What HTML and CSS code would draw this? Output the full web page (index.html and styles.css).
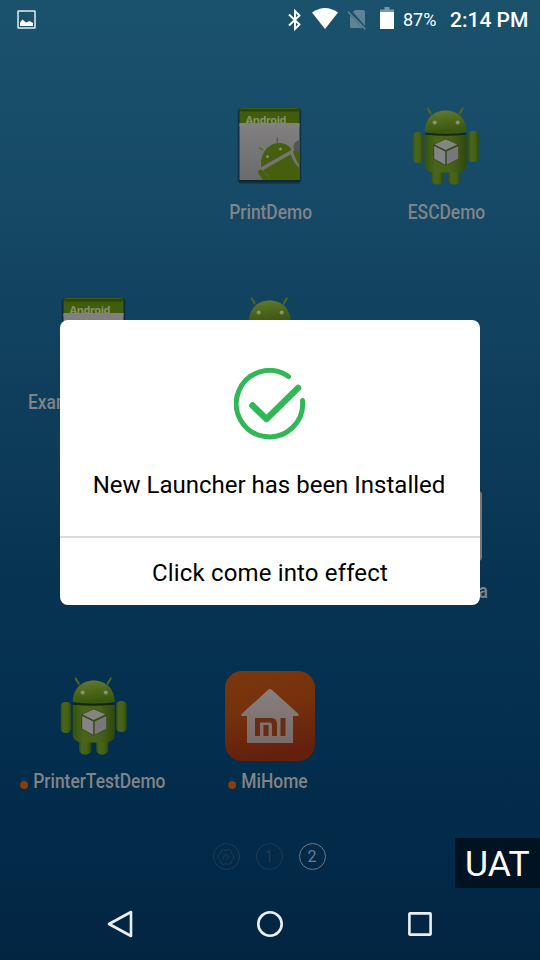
FILE: index.html
```html
<!DOCTYPE html>
<html lang="en">
<head>
<meta charset="utf-8">
<title>Launcher</title>
<link rel="stylesheet" href="styles.css">
</head>
<body>
<svg class="defs" aria-hidden="true">
  <defs>
    <linearGradient id="green" x1="0" x2="1"><stop offset="0" stop-color="#35510f"/><stop offset=".25" stop-color="#486519"/><stop offset=".65" stop-color="#46611a"/><stop offset="1" stop-color="#30480d"/></linearGradient>
    <linearGradient id="head" x1="0" y1="0" x2=".2" y2="1"><stop offset="0" stop-color="#667b35"/><stop offset=".5" stop-color="#4d681b"/><stop offset="1" stop-color="#3a560f"/></linearGradient>
    <linearGradient id="paper" x1="0" x2="0" y1="0" y2="1"><stop offset="0" stop-color="#828080"/><stop offset="1" stop-color="#6b6b6b"/></linearGradient>
    <linearGradient id="orange" x1="0" x2=".2" y1="0" y2="1"><stop offset="0" stop-color="#7b370d"/><stop offset=".5" stop-color="#75300e"/><stop offset="1" stop-color="#64200d"/></linearGradient>
    <linearGradient id="house" x1="0" x2="0" y1="0" y2="1"><stop offset="0" stop-color="#858080"/><stop offset="1" stop-color="#7c6b67"/></linearGradient>
    <symbol id="robot" viewBox="0.800 0 90 90">
      <path d="M30.500 12.500l-3-5M59.500 12.500l3-5" stroke="#4b671b" stroke-width="2.200" stroke-linecap="round"/>
      <rect x="31" y="62" width="12" height="21.500" rx="5" fill="url(#green)"/>
      <rect x="48" y="62" width="12" height="21.500" rx="5" fill="url(#green)"/>
      <rect x="12.500" y="31" width="10.500" height="31" rx="4.500" fill="url(#green)"/>
      <rect x="68" y="30" width="10.500" height="31" rx="4.500" fill="url(#green)"/>
      <path d="M24.500 34h42v29q0 8.500-10 8.500h-22q-10 0-10-8.500z" fill="url(#green)"/>
      <path d="M24.500 31c0-12 8-21.500 21-21.500s21 9.500 21 21.500q-21 3-42 0z" fill="url(#head)"/>
      <path d="M25 32.600q20.500 2.500 41 0" fill="none" stroke="#16270b" stroke-width="1.600"/>
      <circle cx="34.500" cy="21.500" r="2.100" fill="#899079"/><circle cx="57.500" cy="21.500" r="2.100" fill="#899079"/>
      <path d="M45.500 37.500l13 6.500V58l-13 7-12.500-7V44z" fill="#334b14"/>
      <path d="M45.500 38.200l11.500 5.200-11.500 5.600-11-5.600z" fill="#848484"/>
      <path d="M34 44.900l11 5.500v13.300l-11-6z" fill="#848484"/>
      <path d="M58 44.900l-11.500 5.500v13.300l11.500-6z" fill="#777"/>
    </symbol>
    <symbol id="sheet" viewBox="0 0 90 90">
      <rect x="12.500" y="7" width="64" height="76" rx="4" fill="#07131b" opacity=".25"/>
      <rect x="13.500" y="7.500" width="62" height="74" rx="3" fill="#07131b" opacity=".5"/>
      <path d="M14.500 22V10q0-3 3-3h54q3 0 3 3v12z" fill="#3f5d0c"/>
      <path d="M15.500 9.300h58" stroke="#2c430b" stroke-width="2.500"/>
      <path d="M14.500 22h60v57h-60z" fill="url(#paper)"/>
      <text x="20.500" y="22.500" class="sheet-text" textLength="41">Android</text>
      <path d="M14.500 22.500h60v3h-60z" fill="#828080"/>
      <path d="M74.500 39q-6 2-6 7t6 7z" fill="#555"/>
      <path d="M36.300 66c-2-13 7-24 17.500-24 5 0 11 2.500 12.700 7z" fill="#455f0c"/>
      <path d="M38.500 69L65.500 53.500q4 10 9 13.500V79H46z" fill="#455f0c"/>
      <path d="M68 50q3-2 6.500 2v12q-5-6-6.500-14z" fill="#455f0c"/>
      <path d="M32.500 71q2.500-5 7 0l6 8H38z" fill="#455f0c"/>
      <path d="M38 49l-4-2.500M52.300 42.500v-6" stroke="#4b6419" stroke-width="1.300"/>
      <path d="M37.500 67.500L66.500 50l5 12" fill="none" stroke="#777" stroke-width="1.500"/>
      <circle cx="42.500" cy="55.500" r="1.500" fill="#858585"/><circle cx="55.500" cy="48" r="1.500" fill="#858585"/>
    </symbol>
  </defs>
</svg>
<main class="screen">
  <header class="status">
    <svg class="shot" width="20" height="20" viewBox="0 0 20 20"><rect x="1" y="1" width="17" height="17" rx=".5" fill="none" stroke="#e5edf0" stroke-width="1.500"/><path d="M3 16v-3.500L5.500 9.500 9 12.500 12.500 11 16 13v3z" fill="#fff"/></svg>
    <svg class="bt" width="14" height="22" viewBox="0 0 14 22"><path d="M1 5.500l10.500 10L7 20V2l4.500 4.500L1 16.500" fill="none" stroke="#fff" stroke-width="1.900"/></svg>
    <svg class="wifi" width="26" height="21" viewBox="0 0 26 21"><path d="M0 4.500Q13-4.500 26 4.500L13 21z" fill="#fff"/></svg>
    <svg class="sim" width="20" height="21" viewBox="0 0 20 21"><path d="M6 3L8 1h8q2 0 2 2v14zM3 6l13 13H4.500q-1.500 0-1.500-1.500z" fill="#5e8395"/><path d="M.7 2.500l17.600 17.600" stroke="#5e8395" stroke-width="1.500"/></svg>
    <svg class="battery" width="14" height="22" viewBox="0 0 14 22"><path d="M0 5V2.500h4.500V0h5v2.500H14V5z" fill="#769aaa"/><path d="M0 5h14v17H0z" fill="#fff"/></svg>
    <span class="percent">87%</span>
    <span class="clock">2:14 PM</span>
  </header>

  <section class="apps">
    <div class="app"></div>
    <div class="app"><svg class="icon"><use href="#sheet"/></svg><span class="label">PrintDemo</span></div>
    <div class="app"><svg class="icon"><use href="#robot"/></svg><span class="label">ESCDemo</span></div>
    <div class="app"><svg class="icon"><use href="#sheet"/></svg><span class="label label-start">Exam</span></div>
    <div class="app"><svg class="icon"><use href="#robot"/></svg></div>
    <div class="app"></div>
    <div class="app"></div>
    <div class="app"></div>
    <div class="app"><svg class="icon" viewBox="0 0 90 90"><rect x="9" y="10" width="72" height="70" rx="4" fill="#777"/></svg><span class="label label-end">a</span></div>
    <div class="app"><svg class="icon"><use href="#robot"/></svg><span class="label label-new"><i class="dot"></i>PrinterTestDemo</span></div>
    <div class="app">
      <svg class="icon" viewBox="0 0 90 90"><rect width="90" height="90" rx="17" fill="url(#orange)"/><path d="M43.500 18.500q1.500-1.200 3 0L73.500 43q1 2-1 2H68v27H22V45h-4.500q-2 0-1-2z" fill="url(#house)"/><path d="M30 65V47h16q6 0 6 6v12h-5V54q0-2.500-2.500-2.500H35V65zM38.500 54h5v11h-5zM55.500 47h5v18h-5z" fill="#682b14"/></svg>
      <span class="label label-new"><i class="dot"></i>MiHome</span>
    </div>
    <div class="app"></div>
  </section>

  <div class="pager">
    <span class="page"><svg width="18" height="18" viewBox="0 0 18 18" fill="none" stroke="currentColor"><path d="M6.500 1.500q2.500 1.600 5 0l2.500 1.500q0 3 2.700 4.200v3.600Q14 12 14 15l-2.500 1.500q-2.500-1.600-5 0L4 15q0-3-2.700-4.200V7.200Q4 6 4 3z"/><path d="M9 9h-.5M6.700 11.500V9A2.400 2.400 0 1 1 9 11.400"/></svg></span>
    <span class="page">1</span>
    <span class="page current">2</span>
  </div>

  <nav class="nav">
    <svg width="30" height="30" viewBox="0 0 30 30"><path d="M26 3v24L4 15z"/></svg>
    <svg width="30" height="30" viewBox="0 0 30 30"><circle cx="15" cy="15" r="11.700"/></svg>
    <svg width="30" height="30" viewBox="0 0 30 30"><rect x="4.400" y="4.400" width="21.200" height="21.200" rx=".5"/></svg>
  </nav>

  <div class="badge">UAT</div>

  <section class="dialog" role="dialog">
    <svg class="done" width="72" height="72" viewBox="0 0 72 72"><path d="M54.500 8.500A33.200 33.200 0 1 0 68.500 32.500" stroke-width="5"/><path d="M18.500 37.500L32.500 51 64 20" stroke-width="6.500"/></svg>
    <p class="message">New Launcher has been Installed</p>
    <button class="action">Click come into effect</button>
  </section>
</main>
</body>
</html>
```

FILE: styles.css
```css
* { box-sizing: border-box; }

body {
  margin: 0;
  font-family: Roboto, "Liberation Sans", sans-serif;
}

.defs { position: absolute; width: 0; height: 0; }

.screen {
  position: relative;
  display: flex;
  flex-direction: column;
  width: 540px;
  height: 960px;
  overflow: hidden;
  background: linear-gradient(#1a516b 0, #184d69 130px, #124462 290px, #0e3c5b 430px, #083453 570px, #042f4e 720px, #022a49 850px, #022542 960px);
}

.status {
  display: flex;
  align-items: center;
  height: 39px;
  padding: 0 12px 0 17px;
  color: #fff;
}
.shot { margin-right: auto; }
.bt { margin-right: 10px; }
.wifi { margin-right: 9px; margin-top: -2px; }
.sim { margin-right: 13px; }
.battery { margin-right: 9px; margin-top: -3px; }
.percent { width: 47px; font-size: 18px; }
.clock { width: 78px; font-size: 21px; font-weight: 500; white-space: nowrap; }

.apps {
  display: grid;
  grid-template-columns: repeat(3, 176px);
  grid-auto-rows: 190px;
  justify-content: center;
  padding-top: 62px;
  height: 803px;
}
.app {
  display: flex;
  flex-direction: column;
  align-items: center;
}
.icon { width: 90px; height: 90px; flex: none; }
.sheet-text {
  font: bold 11px "Noto Sans", sans-serif;
  fill: #849068;
}
.label {
  display: flex;
  align-items: center;
  margin: 9px 0 0 1px;
  font-size: 20px;
  line-height: 24px;
  font-weight: 500;
  color: #818487;
  white-space: nowrap;
  transform: scaleX(.87);
}
.label-new { margin-top: 8px; }
.label-start { align-self: flex-start; margin-left: 22px; transform-origin: left; }
.label-end { align-self: flex-end; margin-top: 8px; margin-right: 46px; transform-origin: right; }
.dot {
  width: 9px;
  height: 8px;
  margin: 7px 6px 0 -5px;
  border-radius: 50%;
  background: #8b3d09;
}

.pager {
  display: flex;
  justify-content: center;
  gap: 16px;
  height: 46px;
  padding-right: 2px;
}
.page {
  display: flex;
  align-items: center;
  justify-content: center;
  width: 27px;
  height: 27px;
  margin-top: 1px;
  border: 1px solid currentColor;
  border-radius: 50%;
  font-size: 16px;
  color: #1f3e55;
}
.page.current { color: #737b80; }

.nav {
  display: flex;
  justify-content: center;
  gap: 120px;
  padding-top: 21px;
}
.nav svg { fill: none; stroke: #eceff1; stroke-width: 2.600; stroke-linejoin: round; }

.badge {
  position: absolute;
  right: 0;
  top: 838px;
  width: 85px;
  height: 50px;
  padding-left: 10px;
  background: #011323;
  color: #fff;
  font-size: 35.500px;
  line-height: 53px;
}

.dialog {
  position: absolute;
  left: 60px;
  top: 320px;
  display: flex;
  flex-direction: column;
  align-items: center;
  width: 420px;
  height: 285px;
  padding-top: 48px;
  border-radius: 8px;
  background: #fff;
  color: #000;
}
.done { fill: none; stroke: #30b857; stroke-linecap: round; stroke-linejoin: round; }
.message {
  margin: 30px 2px 0 0;
  height: 66px;
  font-size: 24px;
  line-height: 30px;
}
.action {
  width: 100%;
  flex: 1;
  padding: 3px 0 0;
  border: 0;
  border-top: 2px solid #dcdcdc;
  background: none;
  color: inherit;
  font: 24px Roboto, "Liberation Sans", sans-serif;
  letter-spacing: .150px;
}
```
